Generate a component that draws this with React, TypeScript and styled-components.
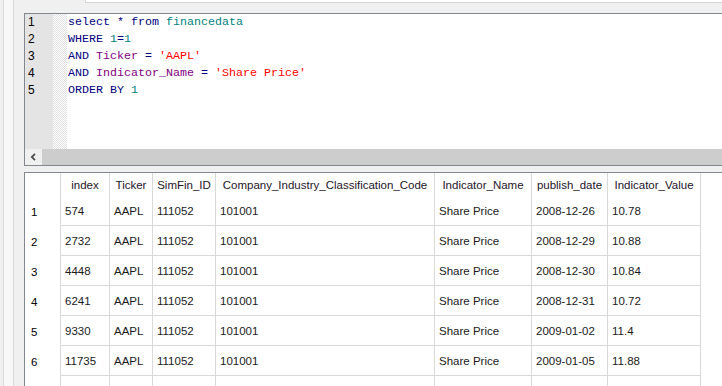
import * as React from 'react';
import styled, { createGlobalStyle } from 'styled-components';

const GlobalStyle = createGlobalStyle`
    html, body {
        margin: 0;
        padding: 0;
        background: #f0f0f0;
        overflow: hidden;
    }
`;

const Frame = styled.div`
    width: 722px;
    height: 386px;
    display: flex;
    overflow: hidden;
    background: #f0f0f0;
`;

const Rail = styled.div`
    width: 24px;
    flex: none;
    display: flex;
    .edge {
        width: 3px;
        border-right: 1px solid #dadada;
    }
    .lane {
        width: 9px;
        background: #f8f8f8;
        border-right: 1px solid #dadada;
    }
    .rest {
        flex: 1;
    }
`;

const Main = styled.div`
    flex: 1;
    min-width: 0;
    display: flex;
    flex-direction: column;
`;

const TopStrip = styled.div`
    height: 13px;
    flex: none;
    padding-left: 61px;
    box-sizing: border-box;
`;

const TabEdge = styled.div`
    height: 2px;
    background: #fff;
    border-left: 1px solid #d4d4d4;
    border-bottom: 1px solid #d4d4d4;
`;

const Editor = styled.div`
    height: 153px;
    flex: none;
    box-sizing: border-box;
    border: 1px solid #828790;
    border-right: none;
    display: flex;
    flex-direction: column;
    background: #fff;
`;

const EditorBody = styled.div`
    flex: 1;
    display: flex;
    min-height: 0;
`;

const Gutter = styled.div`
    width: 28px;
    background: #e4e4e4;
    padding-left: 3px;
    box-sizing: border-box;
    font-family: "Liberation Sans", Arial, sans-serif;
    font-size: 12px;
    color: #000;
`;

const Hatch = styled.div`
    width: 14px;
    background-color: #fff;
    background-image: repeating-conic-gradient(#e0e0e0 0% 25%, #ffffff 0% 50%);
    background-size: 2px 2px;
`;

const GutterLine = styled.div`
    height: 17px;
    line-height: 17px;
`;

const Code = styled.div`
    flex: 1;
    padding-left: 1px;
    font-family: "Liberation Mono", "Courier New", monospace;
    font-size: 11.67px;
    white-space: pre;
`;

const CodeLine = styled.div`
    height: 17px;
    line-height: 17px;
`;

const Tok = styled.span<{ $kind: 'kw' | 'id' | 'str' | 'num' | 'op' }>`
    color: ${p => ({
        kw: '#00007f',
        id: '#7f007f',
        str: '#ff0000',
        num: '#007f7f',
        op: '#00007f'
    })[p.$kind]};
`;

const HScroll = styled.div`
    height: 16px;
    flex: none;
    display: flex;
    background: #cdcdcd;
`;

const ArrowButton = styled.div`
    width: 17px;
    background: #f0f0f0;
    display: flex;
    align-items: center;
    justify-content: center;
`;

const Spacer = styled.div`
    height: 6px;
    flex: none;
`;

const Grid = styled.div`
    flex: 1;
    background: #fff;
    border-top: 1px solid #828790;
    border-left: 1px solid #828790;
    font-family: "Liberation Sans", Arial, sans-serif;
    font-size: 11.5px;
    color: #1a1a1a;
    overflow: hidden;
`;

const columns = [
    { title: 'index', width: 49 },
    { title: 'Ticker', width: 43 },
    { title: 'SimFin_ID', width: 63 },
    { title: 'Company_Industry_Classification_Code', width: 219 },
    { title: 'Indicator_Name', width: 97 },
    { title: 'publish_date', width: 76 },
    { title: 'Indicator_Value', width: 93 }
];

const Row = styled.div<{ $head?: boolean }>`
    display: flex;
    height: ${p => (p.$head ? 23 : 30)}px;
`;

const RowHead = styled.div`
    width: 35px;
    flex: none;
    box-sizing: border-box;
    padding: 2px 0 0 6px;
    display: flex;
    align-items: center;
    color: #000;
`;

const Cell = styled.div<{ $w: number; $head?: boolean; $last?: boolean }>`
    width: ${p => p.$w}px;
    flex: none;
    box-sizing: border-box;
    border-left: 1px solid #d9d9d9;
    ${p => (p.$last ? 'border-right: 1px solid #d9d9d9; width: ' + (p.$w + 1) + 'px;' : '')}
    ${p => (p.$head ? '' : 'border-bottom: 1px solid #d9d9d9;')}
    display: flex;
    align-items: center;
    justify-content: ${p => (p.$head ? 'center' : 'flex-start')};
    padding-left: ${p => (p.$head ? 0 : 4)}px;
    white-space: nowrap;
    overflow: hidden;
    color: ${p => (p.$head ? '#1e1428' : '#1a1a1a')};
`;

const rows = [
    ['574', 'AAPL', '111052', '101001', 'Share Price', '2008-12-26', '10.78'],
    ['2732', 'AAPL', '111052', '101001', 'Share Price', '2008-12-29', '10.88'],
    ['4448', 'AAPL', '111052', '101001', 'Share Price', '2008-12-30', '10.84'],
    ['6241', 'AAPL', '111052', '101001', 'Share Price', '2008-12-31', '10.72'],
    ['9330', 'AAPL', '111052', '101001', 'Share Price', '2009-01-02', '11.4'],
    ['11735', 'AAPL', '111052', '101001', 'Share Price', '2009-01-05', '11.88'],
    ['', '', '', '', '', '', '']
];

export default function App() {
    return (
        <Frame>
            <GlobalStyle />
            <Rail>
                <div className="edge" />
                <div className="lane" />
                <div className="rest" />
            </Rail>
            <Main>
                <TopStrip>
                    <TabEdge />
                </TopStrip>
                <Editor>
                    <EditorBody>
                        <Gutter>
                            {[1, 2, 3, 4, 5].map(n => <GutterLine key={n}>{n}</GutterLine>)}
                        </Gutter>
                        <Hatch />
                        <Code>
                            <CodeLine>
                                <Tok $kind="kw">select</Tok> <Tok $kind="op">*</Tok> <Tok $kind="kw">from</Tok> <Tok $kind="num">financedata</Tok>
                            </CodeLine>
                            <CodeLine>
                                <Tok $kind="kw">WHERE</Tok> <Tok $kind="num">1</Tok><Tok $kind="op">=</Tok><Tok $kind="num">1</Tok>
                            </CodeLine>
                            <CodeLine>
                                <Tok $kind="kw">AND</Tok> <Tok $kind="id">Ticker</Tok> <Tok $kind="op">=</Tok> <Tok $kind="str">'AAPL'</Tok>
                            </CodeLine>
                            <CodeLine>
                                <Tok $kind="kw">AND</Tok> <Tok $kind="id">Indicator_Name</Tok> <Tok $kind="op">=</Tok> <Tok $kind="str">'Share Price'</Tok>
                            </CodeLine>
                            <CodeLine>
                                <Tok $kind="kw">ORDER BY</Tok> <Tok $kind="num">1</Tok>
                            </CodeLine>
                        </Code>
                    </EditorBody>
                    <HScroll>
                        <ArrowButton>
                            <svg width="7" height="8" viewBox="0 0 7 8">
                                <polyline points="5,0.8 1.8,4 5,7.2" fill="none" stroke="#505050" strokeWidth="1.8" />
                            </svg>
                        </ArrowButton>
                    </HScroll>
                </Editor>
                <Spacer />
                <Grid>
                    <Row $head>
                        <RowHead />
                        {columns.map((c, i) => (
                            <Cell key={c.title} $w={c.width} $head $last={i === columns.length - 1}>{c.title}</Cell>
                        ))}
                    </Row>
                    {rows.map((r, ri) => (
                        <Row key={ri}>
                            <RowHead>{r[0] ? ri + 1 : ''}</RowHead>
                            {r.map((v, ci) => (
                                <Cell key={ci} $w={columns[ci].width} $last={ci === columns.length - 1}>{v}</Cell>
                            ))}
                        </Row>
                    ))}
                </Grid>
            </Main>
        </Frame>
    );
}
